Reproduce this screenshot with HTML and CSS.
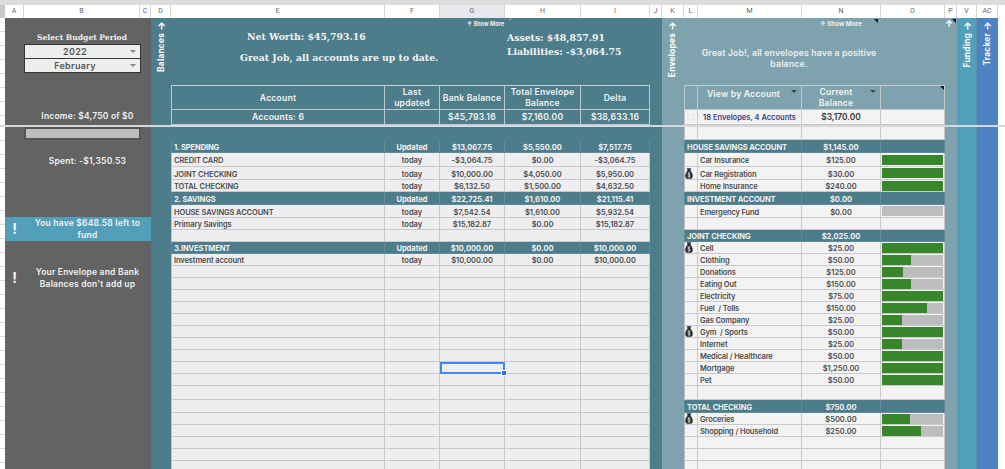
FILE: index.html
```html
<!DOCTYPE html>
<html lang="en">
<head>
<meta charset="utf-8">
<title>Budget</title>
<link rel="stylesheet" href="styles.css">
</head>
<body>
<div class="sheet">
  <div class="topbar"></div>
  <div class="colheads">
    <div class="corner"></div>
    <div class="ch">A</div><div class="ch">B</div><div class="ch">C</div><div class="ch">D</div><div class="ch">E</div><div class="ch">F</div><div class="ch ch-on">G</div><div class="ch">H</div><div class="ch">I</div><div class="ch">J</div><div class="ch">K</div><div class="ch">L</div><div class="ch">M</div><div class="ch">N</div><div class="ch">O</div><div class="ch">P</div><div class="ch">V</div><div class="ch">AC</div>
  </div>

  <div class="band band-top">
    <div class="rowhead"></div>
    <section class="gray gray-top">
      <div class="period">Select Budget Period</div>
      <div class="picker"><span>2022</span><i class="caret"></i></div>
      <div class="picker picker-2"><span>February</span><i class="caret"></i></div>
      <div class="stat stat-income">Income: $4,750 of $0</div>
    </section>
    <section class="teal teal-top">
      <div class="vtab">Balances <b>→</b></div>
      <div class="showmore">↑ Show More</div>
      <span class="tick">`</span>
      <div class="summary">
        <div class="sum-left">
          <p class="sum-a">Net Worth: $45,793.16</p>
          <p class="sum-b">Great Job, all accounts are up to date.</p>
        </div>
        <div class="sum-right">
          <p>Assets: $48,857.91</p>
          <p>Liabilities: -$3,064.75</p>
        </div>
      </div>
      <table class="grid main-top">
        <colgroup><col class="ce"><col class="cf"><col class="cg"><col class="ch2"><col class="ci"></colgroup>
        <tr class="thead"><th>Account</th><th>Last<br>updated</th><th>Bank Balance</th><th>Total Envelope<br>Balance</th><th>Delta</th></tr>
        <tr class="tsub"><th>Accounts: 6</th><th></th><th>$45,793.16</th><th>$7,160.00</th><th>$38,633.16</th></tr>
      </table>
    </section>
    <section class="light light-top">
      <div class="vtab vtab-k">Envelopes <b>→</b></div>
      <div class="showmore showmore-r">↑ Show More</div>
      <i class="flag flag-n"></i>
      <i class="flag flag-p"></i>
      <span class="p-arrow">↑</span>
      <p class="env-msg">Great Job!, all envelopes have a positive balance.</p>
      <table class="grid env-top">
        <colgroup><col class="cl"><col class="cm"><col class="cn"><col class="co"></colgroup>
        <tr class="thead"><th></th><th class="has-caret view-h">View by Account<i class="caret caret-w"></i></th><th class="has-caret cur-h">Current<br>Balance<i class="caret caret-w"></i></th><th class="has-flag"><i class="flag flag-o"></i></th></tr>
        <tr class="tsub-light"><td class="ex">EX</td><td class="link">18 Envelopes, 4 Accounts</td><td class="big">$3,170.00</td><td></td></tr>
      </table>
    </section>
    <div class="vtab-col funding"><div class="vtab">Funding <b>→</b></div></div>
    <div class="vtab-col tracker"><div class="vtab">Tracker <b>→</b></div></div>
    <div class="rest"></div>
  </div>

  <div class="freeze"></div>

  <div class="band band-body">
    <div class="rowhead"></div>
    <section class="gray gray-body">
      <div class="meter"></div>
      <div class="stat stat-spent">Spent: -$1,350.53</div>
      <div class="alert alert-blue"><span class="bang">!</span><span class="alert-text">You have $648.58 left to fund</span></div>
      <div class="alert alert-plain"><span class="bang">!</span><span class="alert-text">Your Envelope and Bank Balances don't add up</span></div>
    </section>
    <section class="teal teal-body">
      <table class="grid main">
        <colgroup><col class="ce"><col class="cf"><col class="cg"><col class="ch2"><col class="ci"></colgroup>
        <tr class="head h13"><td class="lab">1. SPENDING</td><td>Updated</td><td>$13,067.75</td><td>$5,550.00</td><td>$7,517.75</td></tr>
        <tr class="h14"><td class="lab">CREDIT CARD</td><td>today</td><td>-$3,064.75</td><td>$0.00</td><td>-$3,064.75</td></tr>
        <tr class="h13"><td class="lab">JOINT CHECKING</td><td>today</td><td>$10,000.00</td><td>$4,050.00</td><td>$5,950.00</td></tr>
        <tr class="h12"><td class="lab">TOTAL CHECKING</td><td>today</td><td>$6,132.50</td><td>$1,500.00</td><td>$4,632.50</td></tr>
        <tr class="head h13"><td class="lab">2. SAVINGS</td><td>Updated</td><td>$22,725.41</td><td>$1,610.00</td><td>$21,115.41</td></tr>
        <tr class="h13"><td class="lab">HOUSE SAVINGS ACCOUNT</td><td>today</td><td>$7,542.54</td><td>$1,610.00</td><td>$5,932.54</td></tr>
        <tr class="h12"><td class="lab">Primary Savings</td><td>today</td><td>$15,182.87</td><td>$0.00</td><td>$15,182.87</td></tr>
        <tr class="h12"><td></td><td></td><td></td><td></td><td></td></tr>
        <tr class="head h12"><td class="lab">3.INVESTMENT</td><td>Updated</td><td>$10,000.00</td><td>$0.00</td><td>$10,000.00</td></tr>
        <tr class="h12"><td class="lab">Investment account</td><td>today</td><td>$10,000.00</td><td>$0.00</td><td>$10,000.00</td></tr>
        <tr class="h12"><td></td><td></td><td></td><td></td><td></td></tr>
        <tr class="h12"><td></td><td></td><td></td><td></td><td></td></tr>
        <tr class="h12"><td></td><td></td><td></td><td></td><td></td></tr>
        <tr class="h12"><td></td><td></td><td></td><td></td><td></td></tr>
        <tr class="h12"><td></td><td></td><td></td><td></td><td></td></tr>
        <tr class="h12"><td></td><td></td><td></td><td></td><td></td></tr>
        <tr class="h12"><td></td><td></td><td></td><td></td><td></td></tr>
        <tr class="h12"><td></td><td></td><td></td><td></td><td></td></tr>
        <tr class="h12"><td></td><td></td><td class="sel"></td><td></td><td></td></tr>
        <tr class="h12"><td></td><td></td><td></td><td></td><td></td></tr>
        <tr class="h14"><td></td><td></td><td></td><td></td><td></td></tr>
        <tr class="h13"><td></td><td></td><td></td><td></td><td></td></tr>
        <tr class="h12"><td></td><td></td><td></td><td></td><td></td></tr>
        <tr class="h12"><td></td><td></td><td></td><td></td><td></td></tr>
        <tr class="h12"><td></td><td></td><td></td><td></td><td></td></tr>
        <tr class="h12"><td></td><td></td><td></td><td></td><td></td></tr>
        <tr class="h12"><td></td><td></td><td></td><td></td><td></td></tr>
      </table>
    </section>
    <section class="light light-body">
      <svg width="0" height="0" class="defs" aria-hidden="true"><defs>
        <symbol id="bag" viewBox="0 0 10 14"><path d="M2 .4h6L6.7 3h.5v1.2c1.5 1.2 2.6 3.6 2.6 6 0 2.3-1 3.4-2.6 3.4H2.8C1.2 13.6.2 12.5.2 10.2c0-2.4 1.1-4.8 2.6-6V3h.5z" fill="#2c2f33"/><path d="M6.6 6.9C5.8 6.1 3.6 6.2 3.6 7.6c0 1.5 3 1 3 2.6 0 1.4-2.2 1.5-3.2.6M5 5.4v6.8" fill="none" stroke="#f3f3f3" stroke-width=".9"/></symbol>
      </defs></svg>
      <table class="grid env">
        <colgroup><col class="cl"><col class="cm"><col class="cn"><col class="co"></colgroup>
        <tr class="h13"><td></td><td></td><td></td><td></td></tr>
        <tr class="head h13"><td class="lab" colspan="2">HOUSE SAVINGS ACCOUNT</td><td>$1,145.00</td><td></td></tr>
        <tr class="h14"><td></td><td class="name">Car Insurance</td><td>$125.00</td><td class="bc"><div class="bar"><div class="fill fill-full"></div></div></td></tr>
        <tr class="h13"><td class="ic"><svg class="bagi"><use href="#bag"/></svg></td><td class="name">Car Registration</td><td>$30.00</td><td class="bc"><div class="bar"><div class="fill fill-full"></div></div></td></tr>
        <tr class="h12"><td></td><td class="name">Home Insurance</td><td>$240.00</td><td class="bc"><div class="bar"><div class="fill fill-full"></div></div></td></tr>
        <tr class="head h13"><td class="lab" colspan="2">INVESTMENT ACCOUNT</td><td>$0.00</td><td></td></tr>
        <tr class="h13"><td></td><td class="name">Emergency Fund</td><td>$0.00</td><td class="bc"><div class="bar"></div></td></tr>
        <tr class="h12"><td></td><td></td><td></td><td></td></tr>
        <tr class="head h12"><td class="lab" colspan="2">JOINT CHECKING</td><td>$2,025.00</td><td></td></tr>
        <tr class="h12"><td class="ic"><svg class="bagi"><use href="#bag"/></svg></td><td class="name">Cell</td><td>$25.00</td><td class="bc"><div class="bar"><div class="fill fill-full"></div></div></td></tr>
        <tr class="h12"><td></td><td class="name">Clothing</td><td>$50.00</td><td class="bc"><div class="bar"><div class="fill" style="width:47%"></div></div></td></tr>
        <tr class="h12"><td></td><td class="name">Donations</td><td>$125.00</td><td class="bc"><div class="bar"><div class="fill" style="width:34%"></div></div></td></tr>
        <tr class="h12"><td></td><td class="name">Eating Out</td><td>$150.00</td><td class="bc"><div class="bar"><div class="fill" style="width:48%"></div></div></td></tr>
        <tr class="h12"><td></td><td class="name">Electricity</td><td>$75.00</td><td class="bc"><div class="bar"><div class="fill fill-full"></div></div></td></tr>
        <tr class="h12"><td></td><td class="name">Fuel  / Tolls</td><td>$150.00</td><td class="bc"><div class="bar"><div class="fill" style="width:74%"></div></div></td></tr>
        <tr class="h12"><td></td><td class="name">Gas Company</td><td>$25.00</td><td class="bc"><div class="bar"><div class="fill" style="width:33%"></div></div></td></tr>
        <tr class="h12"><td class="ic"><svg class="bagi"><use href="#bag"/></svg></td><td class="name">Gym  / Sports</td><td>$50.00</td><td class="bc"><div class="bar"><div class="fill fill-full"></div></div></td></tr>
        <tr class="h12"><td></td><td class="name">Internet</td><td>$25.00</td><td class="bc"><div class="bar"><div class="fill" style="width:33%"></div></div></td></tr>
        <tr class="h12"><td></td><td class="name">Medical / Healthcare</td><td>$50.00</td><td class="bc"><div class="bar"><div class="fill fill-full"></div></div></td></tr>
        <tr class="h12"><td></td><td class="name">Mortgage</td><td>$1,250.00</td><td class="bc"><div class="bar"><div class="fill fill-full"></div></div></td></tr>
        <tr class="h12"><td></td><td class="name">Pet</td><td>$50.00</td><td class="bc"><div class="bar"><div class="fill fill-full"></div></div></td></tr>
        <tr class="h14"><td></td><td></td><td></td><td></td></tr>
        <tr class="head h13"><td class="lab" colspan="2">TOTAL CHECKING</td><td>$750.00</td><td></td></tr>
        <tr class="h12"><td class="ic"><svg class="bagi"><use href="#bag"/></svg></td><td class="name">Groceries</td><td>$500.00</td><td class="bc"><div class="bar"><div class="fill" style="width:46%"></div></div></td></tr>
        <tr class="h12"><td></td><td class="name">Shopping / Household</td><td>$250.00</td><td class="bc"><div class="bar"><div class="fill" style="width:64%"></div></div></td></tr>
        <tr class="h12"><td></td><td></td><td></td><td></td></tr>
        <tr class="h12"><td></td><td></td><td></td><td></td></tr>
        <tr class="h12"><td></td><td></td><td></td><td></td></tr>
      </table>
    </section>
    <div class="vtab-col funding"></div>
    <div class="vtab-col tracker"></div>
    <div class="rest"></div>
  </div>
</div>
</body>
</html>
```
FILE: styles.css
```css
* { box-sizing: border-box; }
html, body { margin: 0; padding: 0; background: #fff; }
body { width: 1005px; height: 469px; overflow: hidden; font-family: "Inter", "Noto Sans", sans-serif; color: #454545; }
p { margin: 0; }

.sheet { display: flex; flex-direction: column; height: 469px; overflow: hidden; }
.topbar { height: 5px; background: #dcdcdc; }

.colheads {
  display: grid;
  grid-template-columns: 5px 19px 116px 11px 20px 214px 55px 65px 76px 69px 12px 22px 14px 104px 79px 64px 12px 20px 21px 7px;
  height: 13px;
  background: #fff;
}
.corner { background: #c8c8c8; }
.ch {
  font: 400 7px/13px "Roboto", sans-serif;
  color: #666;
  text-align: center;
  border-right: 1px solid #d6d6d6;
}
.ch-on { background: #e6e8ec; }

.band {
  display: grid;
  grid-template-columns: 5px 146px 511px 295px 20px 21px 7px;
}
.band-top { height: 107px; }
.band-body { height: 342px; }
.freeze { height: 2px; background: #d6d8de; }

.rowhead { background: repeating-linear-gradient(#fff 0 13px, #d9d9d9 13px 14px); }
.rest { background: #fff; }

/* gray panel */
.gray { background: #636363; color: #f2f2f2; font-weight: 600; display: flex; flex-direction: column; }
.gray-top { padding: 14px 0 3px 19px; }
.period { width: 116px; text-align: center; font: 700 7.6px/12px "DejaVu Serif", serif; color: #eee; }
.picker {
  width: 117px;
  height: 15px;
  background: #eee;
  border: 1px solid #333;
  position: relative;
  color: #555;
  font-size: 9px;
  line-height: 13px;
  text-align: center;
  padding-right: 15px;
  letter-spacing: .3px;
}
.picker-2 { height: 14px; border-top: 0; }
.caret {
  position: absolute;
  right: 4px;
  top: 5px;
  width: 0;
  height: 0;
  border: 3px solid transparent;
  border-top-color: #888;
  border-bottom: 0;
}
.stat { text-align: center; font-size: 8.5px; line-height: 12px; letter-spacing: .2px; }
.stat-income { margin-top: auto; }
.meter { margin: 0 0 0 19px; width: 117px; height: 13px; background: #bdbdbd; border: 2px solid #555; }
.stat-spent { margin: 15px 0 0 19px; }
.alert { display: flex; align-items: center; margin-top: 50px; min-height: 24px; }
.alert-plain { margin-top: 25px; }
.alert-blue { background: #529fbb; }
.bang { width: 19px; text-align: center; font: 700 14px/14px "Inter", sans-serif; color: #f4f4f4; }
.alert-text { width: 127px; padding: 0 4px; text-align: center; font-size: 8.5px; line-height: 12px; letter-spacing: .2px; }

/* teal panel */
.teal { background: #4d7c8a; position: relative; }
.teal-top { padding-left: 20px; }
.teal-body { padding: 13px 0 0 20px; }
.summary { height: 67px; display: flex; color: #f4f4f4; font: 700 9.3px/14px "DejaVu Serif", serif; }
.sum-left { width: 336px; padding-top: 12px; }
.sum-a { padding-left: 76px; }
.sum-b { padding-left: 69px; margin-top: 7px; }
.sum-right { padding-top: 13px; }

.vtab {
  position: absolute;
  top: 3px;
  left: 3px;
  writing-mode: vertical-rl;
  transform: rotate(180deg);
  font-size: 8.4px;
  font-weight: 700;
  line-height: 15px;
  letter-spacing: .2px;
  color: #fff;
  white-space: nowrap;
}
.vtab b { font-weight: 700; font-size: 10px; }
.showmore { position: absolute; top: 2px; left: 316px; font-size: 5.6px; font-weight: 700; line-height: 9px; color: #f0f0f0; white-space: nowrap; }
.tick { position: absolute; top: 0; left: 358px; color: #fff; font-size: 8px; line-height: 9px; }

/* tables */
.grid { border-collapse: separate; border-spacing: 0; table-layout: fixed; width: 479px; }
.ce { width: 214px; } .cf { width: 55px; } .cg { width: 65px; } .ch2 { width: 76px; } .ci { width: 69px; }
.cl { width: 14px; } .cm { width: 104px; } .cn { width: 79px; } .co { width: 64px; }
.env, .env-top { width: 261px; }

.grid th { padding: 0; color: #f4f4f4; font-size: 8.6px; font-weight: 600; line-height: 11px; text-align: center; border-right: 1px solid #b9c9cf; border-bottom: 1px solid #b9c9cf; letter-spacing: .2px; }
.grid th:first-child { border-left: 1px solid #b9c9cf; }
.main-top tr:first-child th, .env-top tr:first-child th { border-top: 1px solid #c3d0d5; }
.thead th { height: 25px; }
.main-top .thead th { padding-top: 1px; }
.tsub th { height: 15px; font-size: 8.6px; }

.tsub-light td { height: 15px; background: #f3f3f3; text-align: center; border-right: 1px solid #c8c8cc; border-bottom: 1px solid #c8c8cc; padding: 0; }
.tsub-light td:first-child { border-left: 1px solid #c8c8cc; }
.ex { color: #e6e6e6; font-size: 7px; }
.link { color: #40407f; font-size: 7.5px; font-weight: 600; white-space: nowrap; }
.big { font-size: 8.4px; font-weight: 600; color: #333; }

.main td, .env td {
  padding: 3px 0 0;
  background: #eeeef0;
  font-size: 7.5px;
  font-weight: 600;
  line-height: 8px;
  text-align: center;
  color: #4a4a4a;
  border-right: 1px solid #c9c9cd;
  border-bottom: 1px solid #c9c9cd;
  white-space: pre;
  overflow: hidden;
}
.env td { background: #f3f3f3; }
.main td:first-child, .env td:first-child { border-left: 1px solid #c0c0c4; }
.main td.lab, .env td.lab { text-align: left; padding-left: 2px; letter-spacing: -.1px; }
.main tr.head td, .env tr.head td { background: #4d7c8a; color: #f2f2f2; font-weight: 700; border-color: #5f8b98; }
.env td.name { text-align: left; padding-left: 2px; letter-spacing: -.12px; }
.h12 td { height: 12px; }
.h13 td { height: 13px; }
.h14 td { height: 14px; }

.main td.sel { position: relative; overflow: visible; box-shadow: inset 0 0 0 1px #4285f4; border: 1px solid #4285f4; }
.sel::after { content: ""; position: absolute; right: -3px; bottom: -3px; width: 4px; height: 4px; background: #2f6fe0; border: 1px solid #fff; box-sizing: content-box; }

.env td.bc { padding: 0; }
.bar { height: 10px; margin: 0 1px; background: #bdbdbd; }
.fill { height: 100%; background: #37862c; }
.fill-full { width: 100%; }
.env td.ic { padding: 0; }
.bagi { display: block; width: 8px; height: 11px; margin: 0; }
.defs { position: absolute; }

/* light panel */
.light { background: #7fa3ae; position: relative; }
.light-top { padding-left: 22px; }
.light-body { padding: 0 0 0 22px; }
.showmore-r { left: 158px; top: 2px; font-size: 6.3px; }
.env-msg { height: 67px; padding: 29px 0 0; width: 210px; text-align: center; color: #e9eef0; font-size: 8.8px; font-weight: 600; line-height: 11px; letter-spacing: .1px; }
.env-top th { background: #7fa3ae; border-color: #c2c9cc; }
.env-top .view-h { vertical-align: top; padding: 3px 12px 0 0; }
.env-top .cur-h { vertical-align: top; padding: 1px 10px 0 0; }
.has-caret, .has-flag { position: relative; }
.caret-w { border-top-color: #444; right: 4px; top: 4px; }
.flag { position: absolute; width: 0; height: 0; border-style: solid; border-width: 0 4px 4px 0; border-color: transparent #111 transparent transparent; }
.flag-n { top: 1px; left: 212px; }
.flag-p { top: 1px; left: 290px; }
.flag-o { top: 0; right: 0; }
.p-arrow { position: absolute; top: 0; left: 283px; color: #fff; font-size: 9px; font-weight: 700; line-height: 12px; }

.vtab-col { position: relative; }
.funding { background: #529fbb; border-right: 1px solid #5f93a8; }
.tracker { background: #4d82c3; }
```
